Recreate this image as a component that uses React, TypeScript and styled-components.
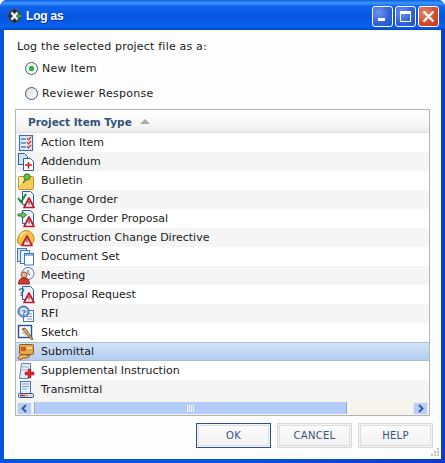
import { createGlobalStyle, styled } from "styled-components";
import type { ReactNode } from "react";

const Global = createGlobalStyle`
  html, body { margin: 0; padding: 0; background: #fff; }
  * { box-sizing: border-box; }
`;

const Window = styled.div`
  width: 445px;
  height: 463px;
  display: flex;
  flex-direction: column;
  background: linear-gradient(90deg, #0855dd 0%, #0855dd 50%, #0a3ccc 100%);
  border-radius: 7px 7px 0 0;
  overflow: hidden;
  font-family: "DejaVu Sans", Verdana, sans-serif;
`;

const TitleBar = styled.div`
  height: 30px;
  flex: none;
  display: flex;
  align-items: center;
  padding: 2px 6px 0 7px;
  background: linear-gradient(180deg, #0a5fe8 0%, #3f97ff 10%, #0f62ea 22%, #0556e2 60%, #0662ee 88%, #0347c8 100%);
`;

const TitleIcon = styled.svg`
  width: 16px;
  height: 16px;
  flex: none;
`;

const TitleText = styled.div`
  margin-left: 3px;
  flex: 1;
  color: #fff;
  font: bold 12px "Liberation Sans", Arial, sans-serif;
  letter-spacing: -0.2px;
  text-shadow: 1px 1px 0 #0a2f9c;
`;

const CtlButton = styled.div<{ $close?: boolean }>`
  width: 21px;
  height: 21px;
  margin-left: 2px;
  border: 1px solid #fff;
  border-radius: 3px;
  background: ${(p) =>
    p.$close
      ? "radial-gradient(circle at 30% 30%, #e8866a, #d4492a 60%, #c23a1c)"
      : "radial-gradient(circle at 30% 30%, #6f92ee, #2e5fdc 60%, #2450cc)"};
  display: flex;
  align-items: center;
  justify-content: center;
`;

const Body = styled.div`
  flex: 1;
  margin: 0 4px 4px;
  background: #fdfdfd;
  padding: 9px 11px 0;
  display: flex;
  flex-direction: column;
  position: relative;
  color: #1a1a1a;
  font-size: 11px;
`;

const Prompt = styled.div`
  height: 17px;
  line-height: 16px;
  margin-left: 2px;
  letter-spacing: 0.2px;
`;

const RadioRow = styled.div`
  display: flex;
  align-items: center;
  height: 25px;
  padding-left: 10px;
  letter-spacing: 0.28px;
`;

const Radio = styled.span<{ $on?: boolean }>`
  width: 13px;
  height: 13px;
  margin-right: 4px;
  border-radius: 50%;
  border: 1px solid #3c5c84;
  background: ${(p) =>
    p.$on
      ? "radial-gradient(circle, #28b840 0, #28b840 2.5px, #f4f4ee 3px)"
      : "linear-gradient(135deg, #dcdcd4, #fff)"};
`;

const Table = styled.div`
  margin-top: 3px;
  height: 307px;
  border: 1px solid #b4b4b4;
  display: flex;
  flex-direction: column;
  background: #fff;
`;

const HeaderRow = styled.div`
  height: 23px;
  flex: none;
  display: flex;
  align-items: center;
  padding: 2px 0 0 12px;
  color: #34527a;
  font-weight: bold;
  font-size: 10.5px;
  background: linear-gradient(180deg, #fff, #f6f6f6 70%, #ececec);
  border-bottom: 1px solid #dcdcdc;
`;

const SortArrow = styled.span`
  width: 0;
  height: 0;
  margin: -1px 0 0 8px;
  border-left: 5px solid transparent;
  border-right: 5px solid transparent;
  border-bottom: 5px solid #b0ab9c;
`;

const Rows = styled.div`
  flex: 1;
  min-height: 0;
`;

const Row = styled.div<{ $odd: boolean; $selected?: boolean }>`
  height: 19px;
  display: flex;
  align-items: center;
  padding-left: 1px;
  background: ${(p) =>
    p.$selected ? "linear-gradient(180deg, #d2e2f6, #b4cdf0)" : p.$odd ? "#f5f5f5" : "#fff"};
  ${(p) => (p.$selected ? "border-top: 1px solid #a4bede; border-bottom: 1px solid #a4bede;" : "")}
`;

const RowIcon = styled.svg`
  width: 18px;
  height: 18px;
  flex: none;
  margin-right: 6px;
`;

const ScrollBar = styled.div`
  height: 16px;
  flex: none;
  display: flex;
  align-items: stretch;
  background: #f6f5ec;
  padding: 2px 1px 0;
  border-top: 1px solid #f2f2f2;
`;

const ScrollArrow = styled.div`
  width: 15px;
  background: #b9cdf5;
  border: 1px solid #e6eefc;
  display: flex;
  align-items: center;
  justify-content: center;
`;

const ScrollThumb = styled.div`
  width: 313px;
  margin: 0 0 1px 2px;
  background: #b5ccf8;
  border-left: 1px solid #8ca8dc;
  border-right: 1px solid #8ca8dc;
  display: flex;
  align-items: center;
  justify-content: center;
  gap: 1px;
`;

const ScrollTrack = styled.div`
  flex: 1;
`;

const Grip = styled.span`
  width: 1px;
  height: 7px;
  background: #eef4ff;
`;

const Footer = styled.div`
  margin: 7px -11px 0 0;
  display: flex;
  justify-content: flex-end;
  gap: 6px;
  padding-right: 8px;
`;

const Button = styled.div<{ $primary?: boolean }>`
  width: 75px;
  height: 25px;
  display: flex;
  align-items: center;
  justify-content: center;
  color: #34527a;
  font-size: 10px;
  letter-spacing: 0.3px;
  border: 1px solid ${(p) => (p.$primary ? "#2a5290" : "#d8d8d8")};
  box-shadow: inset 0 0 0 1px #f4f4f4, inset 0 0 0 2px #dedede;
  background: linear-gradient(180deg, #fdfdfd, #f1f1f1);
`;

const ResizeGrip = styled.svg`
  position: absolute;
  right: 1px;
  bottom: 1px;
  width: 11px;
  height: 11px;
`;

const Doc = ({ x = 5, y = 1, w = 10, h = 14, fill = "#fff" }: { x?: number; y?: number; w?: number; h?: number; fill?: string }) => (
  <path
    d={`M${x + 0.5} ${y + 0.5}h${w - 4}l3 3v${h - 3}h-${w - 1}z`}
    fill={fill}
    stroke="#2f5f9c"
    strokeWidth="1"
  />
);

const Warn = ({ x = 7, y = 7 }: { x?: number; y?: number }) => (
  <>
    <path d={`M${x + 5} ${y}l5 9.5h-10z`} fill="#f4e8e8" stroke="#b81c2c" strokeWidth="1.7" strokeLinejoin="round" />
    <path d={`M${x + 5} ${y + 3}v3.5`} stroke="#b81c2c" strokeWidth="1.2" />
  </>
);

const icons: Record<string, ReactNode> = {
  action: (
    <>
      <rect x="2.5" y="1.5" width="13" height="15" fill="#e4eef8" stroke="#3f6ea8" strokeWidth="1.2" />
      <path d="M4 5h5M4 9h5M4 13h5" stroke="#3f88d0" strokeWidth="1.3" />
      <path d="M10 4l1.5 2 2.5-3M10 8l1.5 2 2.5-3M10 12l1.5 2 2.5-3" stroke="#d03030" strokeWidth="1.2" fill="none" />
    </>
  ),
  addendum: (
    <>
      <Doc x={1} y={0} w={10} h={11} fill="#cfe2f6" />
      <Doc x={6} y={5} w={11} h={12} />
      <path d="M8 12h7M11.5 9v6.5" stroke="#d02030" strokeWidth="1.6" />
    </>
  ),
  bulletin: (
    <>
      <rect x="1.5" y="4.5" width="15" height="13" rx="1" fill="#f6cc58" stroke="#c09428" />
      <path d="M2 5h8L2 14z" fill="#ffe9a4" />
      <circle cx="10" cy="5" r="3.2" fill="#6cb83c" stroke="#3e8a20" />
      <path d="M9 7l-3 4" stroke="#4a8a2c" strokeWidth="1.6" />
    </>
  ),
  order: (
    <>
      <Doc x={5} y={0} w={12} h={13} fill="#eaf2fb" />
      <path d="M1 7l3 4 5-8" stroke="#1c8c3c" strokeWidth="2" fill="none" />
      <Warn />
    </>
  ),
  proposal: (
    <>
      <Doc x={5} y={0} w={12} h={13} fill="#eaf2fb" />
      <path d="M1 4h4V1.5L9.5 5 5 8.5V6H1z" fill="#6fd060" stroke="#1c7c3c" />
      <Warn />
    </>
  ),
  directive: (
    <>
      <path d="M0.5 12C0.5 7 4.5 1.5 9 1.5s8 4 8 8.5-3 6-8.5 6-8-1-8-4z" fill="#f6c040" stroke="#b88a20" />
      <path d="M3.5 8c1-3 3-4.5 5.5-4.5" stroke="#ffe9a8" strokeWidth="1.6" fill="none" />
      <Warn x={5} y={7} />
    </>
  ),
  docset: (
    <>
      <rect x="0.5" y="0.5" width="9" height="13" fill="#d8e8f8" stroke="#3e78b8" />
      <rect x="3.5" y="2.5" width="9" height="13" fill="#e8f2fc" stroke="#3e78b8" />
      <rect x="7.5" y="5.5" width="9" height="11.5" fill="#fff" stroke="#3e78b8" />
      <path d="M8 6h8v2H8z" fill="#8ab4e0" />
    </>
  ),
  meeting: (
    <>
      <circle cx="11" cy="6.5" r="6" fill="#eef2f6" stroke="#6a7a92" />
      <path d="M11 3v3.5l2 1.5" stroke="#44546c" fill="none" />
      <circle cx="7" cy="8" r="3" fill="#e8b48c" stroke="#8a5a3c" />
      <path d="M1.5 17c0-4 2-6 5.5-6s5.5 2 5.5 6z" fill="#cc3a34" stroke="#8c2020" />
    </>
  ),
  request: (
    <>
      <Doc x={5} y={0} w={12} h={13} fill="#eaf2fb" />
      <text x="1" y="10" fontSize="11" fontWeight="bold" fill="#3a6aa8" fontFamily="Liberation Sans">?</text>
      <Warn />
    </>
  ),
  rfi: (
    <>
      <rect x="6.5" y="5.5" width="10" height="11" fill="#fff" stroke="#3e78b8" />
      <path d="M10 9h5M10 11.5h5M10 14h5" stroke="#6a98cc" />
      <circle cx="6.5" cy="6.5" r="5.5" fill="#7ea8d8" stroke="#2f5f9c" />
      <circle cx="6.5" cy="6.5" r="3.4" fill="#e8f0fa" />
      <text x="4.2" y="9.5" fontSize="8" fontWeight="bold" fill="#1c4c94" fontFamily="Liberation Sans">?</text>
    </>
  ),
  sketch: (
    <>
      <rect x="1.5" y="1.5" width="13" height="12" fill="#fff" stroke="#2c4c94" strokeWidth="1.4" />
      <path d="M5 5l7 8 3 3 1-1-3-4-5-7z" fill="#d8b070" stroke="#7a5c34" />
      <path d="M4 9c2-1 4 1 5 3" stroke="#8a98b0" fill="none" />
    </>
  ),
  submittal: (
    <>
      <rect x="2.5" y="1.5" width="14" height="10" rx="1" fill="#e8a848" stroke="#8c5a1c" />
      <rect x="4" y="4" width="5" height="4" fill="#cc5a28" />
      <rect x="10" y="4" width="5" height="2" fill="#f8e0a0" />
      <path d="M1 15c2-3 5-4 8-3l4 1-3 2H6l-3 2z" fill="#f0b860" stroke="#a0521c" />
    </>
  ),
  supplemental: (
    <>
      <path d="M4.5 1.5h9v10l-2 5h-9z" fill="#e4ecf8" stroke="#5c7cac" />
      <path d="M5 5h7M5 8h5" stroke="#9ab4d8" />
      <path d="M11 7h3v3h3v3h-3v3h-3v-3H8v-3h3z" fill="#d42830" stroke="#9c1c20" strokeWidth="0.5" />
    </>
  ),
  transmittal: (
    <>
      <rect x="3.5" y="0.5" width="10" height="12" fill="#e4ecf8" stroke="#4a78b4" />
      <path d="M5 3h7M5 5.5h7M5 8h5" stroke="#7aa4d8" />
      <rect x="1.5" y="12.5" width="15" height="4" rx="1" fill="#d8dce8" stroke="#3e4e80" />
      <path d="M3 14.5h3" stroke="#7a2ca0" strokeWidth="1.5" />
      <path d="M6 14.5h2" stroke="#d83030" strokeWidth="1.5" />
      <path d="M8 14.5h3" stroke="#f0a020" strokeWidth="1.5" />
    </>
  ),
};

const items = [
  { label: "Action Item", icon: "action" },
  { label: "Addendum", icon: "addendum" },
  { label: "Bulletin", icon: "bulletin" },
  { label: "Change Order", icon: "order" },
  { label: "Change Order Proposal", icon: "proposal" },
  { label: "Construction Change Directive", icon: "directive" },
  { label: "Document Set", icon: "docset" },
  { label: "Meeting", icon: "meeting" },
  { label: "Proposal Request", icon: "request" },
  { label: "RFI", icon: "rfi" },
  { label: "Sketch", icon: "sketch" },
  { label: "Submittal", icon: "submittal" },
  { label: "Supplemental Instruction", icon: "supplemental" },
  { label: "Transmittal", icon: "transmittal" },
];

export default function App() {
  return (
    <Window>
      <Global />
      <TitleBar>
        <TitleIcon viewBox="0 0 16 16">
          <circle cx="7.5" cy="8" r="7" fill="#3c4a68" />
          <path d="M7.5 1l2.5 3H5zM7.5 15L5 12h5zM1 8l3-2.5v5z" fill="#1c2438" />
          <path d="M4.5 4.5l6 7M10.5 4.5l-6 7" stroke="#fff" strokeWidth="2" />
          <path d="M10 5.5l5.5 2.5L10 10.5z" fill="#2caa44" />
        </TitleIcon>
        <TitleText>Log as</TitleText>
        <CtlButton>
          <svg width="11" height="11" viewBox="0 0 11 11">
            <rect x="1" y="7" width="7" height="3" fill="#fff" />
          </svg>
        </CtlButton>
        <CtlButton>
          <svg width="13" height="13" viewBox="0 0 13 13">
            <rect x="1.5" y="1.5" width="10" height="10" fill="none" stroke="#fff" />
            <rect x="1" y="1" width="11" height="3" fill="#fff" />
          </svg>
        </CtlButton>
        <CtlButton $close>
          <svg width="13" height="13" viewBox="0 0 13 13">
            <path d="M1.5 1.5l10 10M11.5 1.5l-10 10" stroke="#fff" strokeWidth="2.2" />
          </svg>
        </CtlButton>
      </TitleBar>
      <Body>
        <Prompt>Log the selected project file as a:</Prompt>
        <RadioRow>
          <Radio $on />
          New Item
        </RadioRow>
        <RadioRow>
          <Radio />
          Reviewer Response
        </RadioRow>
        <Table>
          <HeaderRow>
            Project Item Type
            <SortArrow />
          </HeaderRow>
          <Rows>
            {items.map((item, i) => (
              <Row key={item.label} $odd={i % 2 === 1} $selected={item.label === "Submittal"}>
                <RowIcon viewBox="0 0 18 18">{icons[item.icon]}</RowIcon>
                {item.label}
              </Row>
            ))}
          </Rows>
          <ScrollBar>
            <ScrollArrow>
              <svg width="9" height="9" viewBox="0 0 9 9">
                <path d="M6 1L2.5 4.5 6 8" fill="none" stroke="#3c5c94" strokeWidth="2" />
              </svg>
            </ScrollArrow>
            <ScrollThumb>
              <Grip />
              <Grip />
              <Grip />
              <Grip />
            </ScrollThumb>
            <ScrollTrack />
            <ScrollArrow>
              <svg width="9" height="9" viewBox="0 0 9 9">
                <path d="M3 1l3.5 3.5L3 8" fill="none" stroke="#3c5c94" strokeWidth="2" />
              </svg>
            </ScrollArrow>
          </ScrollBar>
        </Table>
        <Footer>
          <Button $primary>OK</Button>
          <Button>CANCEL</Button>
          <Button>HELP</Button>
        </Footer>
        <ResizeGrip viewBox="0 0 11 11">
          <path d="M8 1h2v2H8zM5 4h2v2H5zM8 4h2v2H8zM2 7h2v2H2zM5 7h2v2H5zM8 7h2v2H8z" fill="#c4c4bc" />
        </ResizeGrip>
      </Body>
    </Window>
  );
}
